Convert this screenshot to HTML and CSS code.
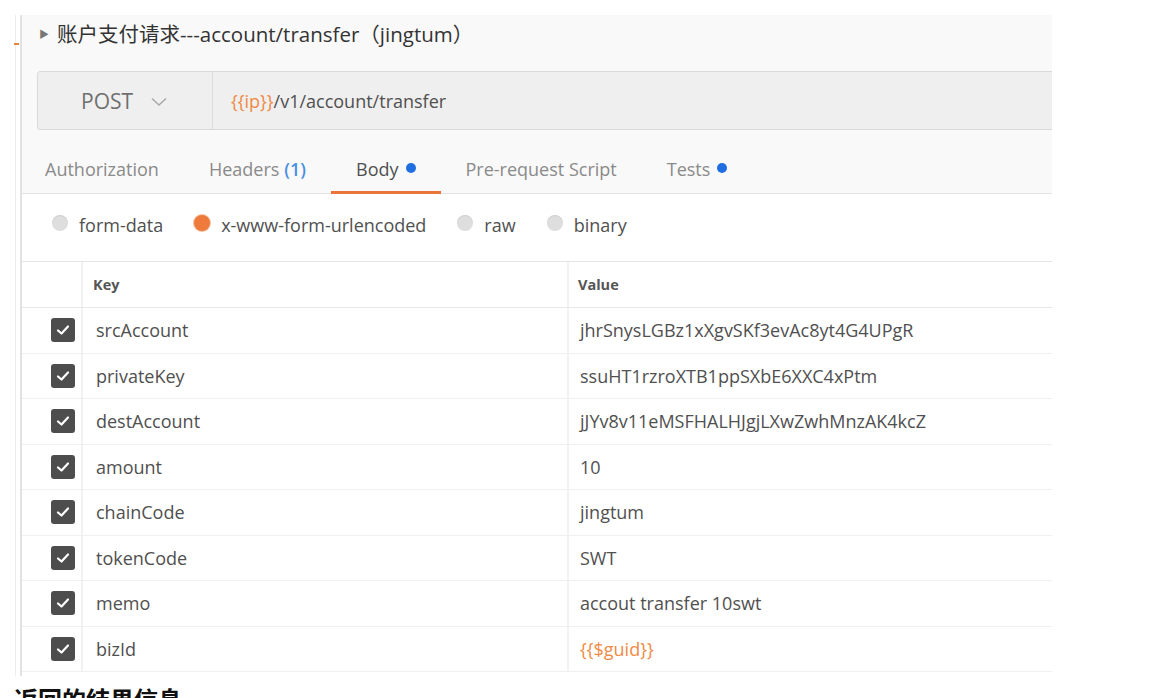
FILE: index.html
```html
<!DOCTYPE html>
<html lang="zh">
<head>
<meta charset="utf-8">
<title>账户支付请求</title>
<link rel="stylesheet" href="styles.css">
</head>
<body>
<div class="page">
  <div class="side">
    <span class="side-mark"></span>
    <span class="side-rule"></span>
  </div>
  <div class="panel">
    <div class="head">
      <div class="title"><span class="tri">&#9654;</span><span>账户支付请求---account/transfer（jingtum）</span></div>
      <div class="urlbar">
        <div class="method">POST
          <svg class="chev" width="16" height="10" viewBox="0 0 16 10"><polyline points="1,1.5 8,8 15,1.5" fill="none" stroke="#a8a8a8" stroke-width="1.5"/></svg>
        </div>
        <div class="url"><span class="var">{{ip}}</span>/v1/account/transfer</div>
      </div>
      <div class="tabs">
        <div class="tab">Authorization</div>
        <div class="tab">Headers <b class="count">(1)</b></div>
        <div class="tab active">Body <span class="dot"></span></div>
        <div class="tab">Pre-request Script</div>
        <div class="tab">Tests <span class="dot"></span></div>
      </div>
    </div>
    <div class="radios">
      <label class="radio"><span class="circ"></span>form-data</label>
      <label class="radio"><span class="circ on"></span>x-www-form-urlencoded</label>
      <label class="radio"><span class="circ"></span>raw</label>
      <label class="radio"><span class="circ"></span>binary</label>
    </div>
    <div class="table">
      <div class="row hdr">
        <div class="c-chk"></div>
        <div class="c-key">Key</div>
        <div class="c-val">Value</div>
      </div>
      <div class="row"><div class="c-chk"><span class="cb"><svg width="14" height="12" viewBox="0 0 14 12"><polyline points="2,6.5 5.5,9.5 12,2.5" fill="none" stroke="#fff" stroke-width="2.2" stroke-linecap="round" stroke-linejoin="round"/></svg></span></div><div class="c-key">srcAccount</div><div class="c-val">jhrSnysLGBz1xXgvSKf3evAc8yt4G4UPgR</div></div>
      <div class="row"><div class="c-chk"><span class="cb"><svg width="14" height="12" viewBox="0 0 14 12"><polyline points="2,6.5 5.5,9.5 12,2.5" fill="none" stroke="#fff" stroke-width="2.2" stroke-linecap="round" stroke-linejoin="round"/></svg></span></div><div class="c-key">privateKey</div><div class="c-val">ssuHT1rzroXTB1ppSXbE6XXC4xPtm</div></div>
      <div class="row"><div class="c-chk"><span class="cb"><svg width="14" height="12" viewBox="0 0 14 12"><polyline points="2,6.5 5.5,9.5 12,2.5" fill="none" stroke="#fff" stroke-width="2.2" stroke-linecap="round" stroke-linejoin="round"/></svg></span></div><div class="c-key">destAccount</div><div class="c-val">jJYv8v11eMSFHALHJgjLXwZwhMnzAK4kcZ</div></div>
      <div class="row"><div class="c-chk"><span class="cb"><svg width="14" height="12" viewBox="0 0 14 12"><polyline points="2,6.5 5.5,9.5 12,2.5" fill="none" stroke="#fff" stroke-width="2.2" stroke-linecap="round" stroke-linejoin="round"/></svg></span></div><div class="c-key">amount</div><div class="c-val">10</div></div>
      <div class="row"><div class="c-chk"><span class="cb"><svg width="14" height="12" viewBox="0 0 14 12"><polyline points="2,6.5 5.5,9.5 12,2.5" fill="none" stroke="#fff" stroke-width="2.2" stroke-linecap="round" stroke-linejoin="round"/></svg></span></div><div class="c-key">chainCode</div><div class="c-val">jingtum</div></div>
      <div class="row"><div class="c-chk"><span class="cb"><svg width="14" height="12" viewBox="0 0 14 12"><polyline points="2,6.5 5.5,9.5 12,2.5" fill="none" stroke="#fff" stroke-width="2.2" stroke-linecap="round" stroke-linejoin="round"/></svg></span></div><div class="c-key">tokenCode</div><div class="c-val">SWT</div></div>
      <div class="row"><div class="c-chk"><span class="cb"><svg width="14" height="12" viewBox="0 0 14 12"><polyline points="2,6.5 5.5,9.5 12,2.5" fill="none" stroke="#fff" stroke-width="2.2" stroke-linecap="round" stroke-linejoin="round"/></svg></span></div><div class="c-key">memo</div><div class="c-val">accout transfer 10swt</div></div>
      <div class="row"><div class="c-chk"><span class="cb"><svg width="14" height="12" viewBox="0 0 14 12"><polyline points="2,6.5 5.5,9.5 12,2.5" fill="none" stroke="#fff" stroke-width="2.2" stroke-linecap="round" stroke-linejoin="round"/></svg></span></div><div class="c-key">bizId</div><div class="c-val var">{{$guid}}</div></div>
    </div>
  </div>
</div>
<div class="caption">返回的结果信息</div>
</body>
</html>
```

FILE: styles.css
```css
* { box-sizing: border-box; }
html, body { margin: 0; padding: 0; background: #fff; overflow: hidden; }
body {
  width: 1168px; height: 698px;
  font-family: "Open Sans", "Noto Sans CJK SC", sans-serif;
  color: #505050;
}
.page { display: flex; padding-top: 15px; height: 676px; }
.side {
  position: relative;
  width: 20px; flex: none;
}
.side-rule {
  position: absolute; left: 15px; top: 0; bottom: 0; width: 1px; background: #ececec;
}
.side-mark {
  position: absolute; left: 14px; top: 28px; width: 5px; height: 2px; background: #e8843f; z-index: 1;
}
.panel {
  width: 1032px; flex: none;
  border-left: 2px solid #e2e2e2;
  overflow: hidden;
  display: flex; flex-direction: column;
}
.head { background: #f9f9f9; }
.title {
  height: 44px; display: flex; align-items: center; gap: 8px;
  padding-left: 17px; padding-bottom: 8px;
  font-family: "Open Sans", "Noto Sans CJK SC", sans-serif;
  font-size: 20.5px; color: #333;
}
.tri { font-size: 10px; color: #777; }
.urlbar {
  margin: 12px -12px 0 15px; height: 59px;
  display: flex; background: #efefef;
  border: 1px solid #dadada; border-radius: 3px;
}
.method {
  width: 175px; flex: none;
  display: flex; align-items: center; gap: 18px;
  padding-left: 43px;
  font-size: 21px; color: #6f6f6f;
  border-right: 1px solid #dcdcdc;
}
.chev { margin-top: 2px; }
.url {
  display: flex; align-items: center; padding-left: 18px;
  font-size: 18px; color: #505050;
}
.var { color: #f08a45; }
.tabs {
  display: flex; height: 64px; margin-left: -2px;
  border-bottom: 1px solid #e4e4e4;
}
.tab {
  display: flex; align-items: center; gap: 7px;
  padding: 16px 25px 0; font-size: 18px; color: #8a8a8a;
  border-bottom: 3px solid transparent; margin-bottom: -1px;
}
.tab.active { color: #505050; border-bottom-color: #eb7539; }
.count { color: #4a90e2; font-weight: 600; margin-left: -2px; }
.dot { width: 10px; height: 10px; border-radius: 50%; background: #1f6fe0; display: inline-block; margin-top: -2px; }
.radios {
  height: 67px; display: flex; align-items: center; gap: 31px;
  padding-left: 30px; padding-bottom: 6px;
  font-size: 18px; color: #505050;
}
.radio { display: flex; align-items: center; gap: 11px; }
.circ {
  width: 16px; height: 16px; border-radius: 50%;
  background: #dedede; box-shadow: inset 0 1px 1px rgba(0,0,0,0.08);
  margin-top: -4px;
}
.circ.on { background: #ee7b3b; box-shadow: 0 0 0 1px #f2c2a4; }
.table { display: flex; flex-direction: column; border-top: 1px solid #e6e6e6; }
.row {
  display: flex; height: 45.5px;
  border-bottom: 1px solid #f0f0f0;
  font-size: 18px; color: #505050;
}
.row.hdr { height: 46px; border-bottom-color: #e8e8e8; }
.c-chk {
  width: 61px; flex: none; display: flex; align-items: center; justify-content: flex-end;
  padding-right: 6px; border-right: 2px solid #f2f2f2;
}
.c-key {
  width: 486px; flex: none; display: flex; align-items: center; padding-left: 13px;
  border-right: 2px solid #f2f2f2;
}
.c-val { flex: 1; display: flex; align-items: center; padding-left: 11px; }
.hdr .c-key, .hdr .c-val { font-size: 14.5px; font-weight: 700; color: #555; padding-left: 10px; }
.hdr .c-val { padding-left: 9px; }
.cb {
  width: 24px; height: 24px; border-radius: 3px; background: #4d4d4d;
  display: flex; align-items: center; justify-content: center;
}
.caption {
  padding: 8px 0 0 14px;
  font-family: "Noto Sans CJK SC", sans-serif; font-size: 24px; font-weight: 700; color: #111;
  line-height: 30px;
}
```
